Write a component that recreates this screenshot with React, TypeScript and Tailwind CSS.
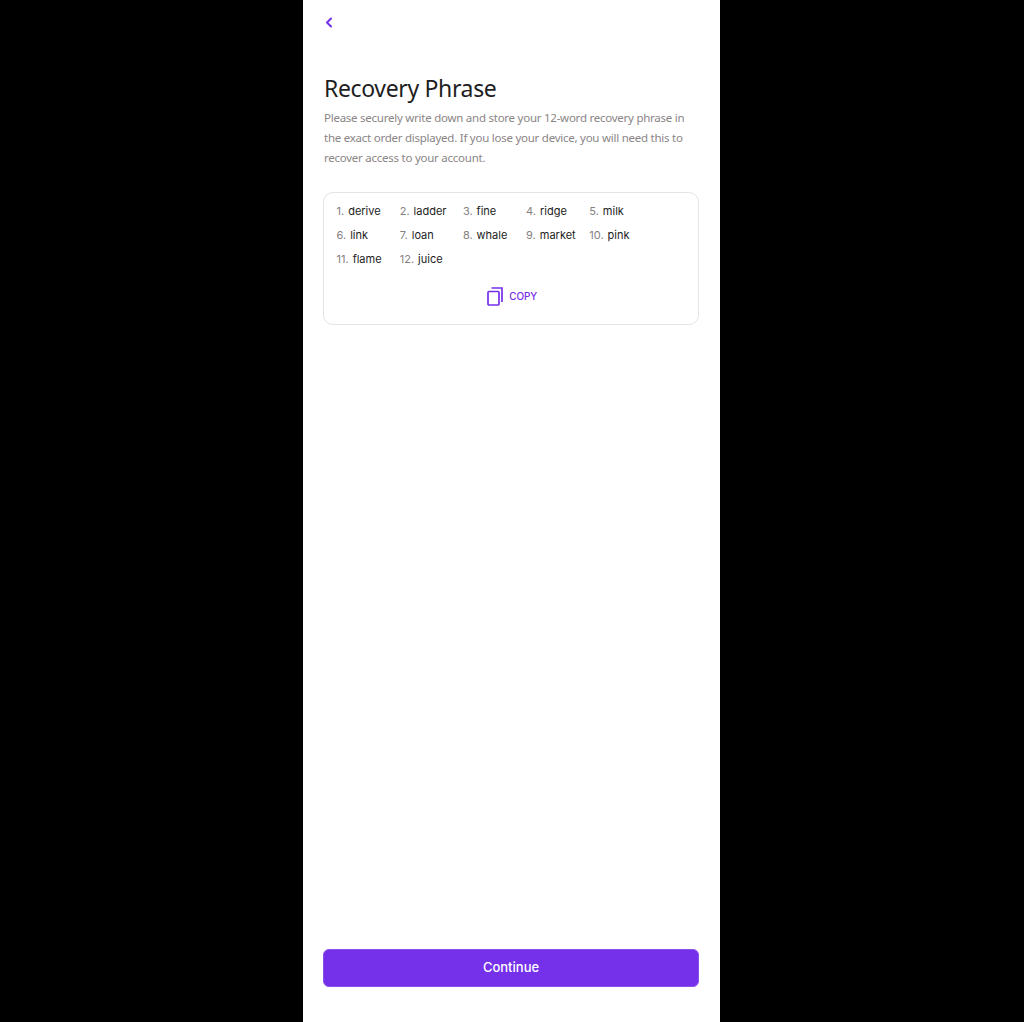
import { ChevronLeft } from "lucide-react";

const words = ["derive", "ladder", "fine", "ridge", "milk", "link", "loan", "whale", "market", "pink", "flame", "juice"];

export default function App() {
  return (
    <div className="flex h-[1022px] justify-center bg-black">
      <div className="ml-[-1px] flex h-full w-[417px] flex-col bg-white pb-[35px] pl-[20px] pr-[21px] pt-[12px]">
        <button className="flex h-[20px] w-[14px] items-center text-[#7530ea]">
          <ChevronLeft size={21} strokeWidth={3} className="ml-[-2px]" />
        </button>

        <h1 className="mt-[39px] pl-[1px] font-['Noto_Sans'] text-[23px] leading-[34px] tracking-[-0.35px] text-[#1e1e1e]">Recovery Phrase</h1>
        <p className="mt-[3px] pl-[1px] font-['Noto_Sans'] text-[11.5px] leading-[20px] tracking-[-0.25px] text-[#8a8586]">
          Please securely write down and store your 12-word recovery phrase in the exact order displayed. If you lose your device, you will need this to recover access to your account.
        </p>

        <div className="mt-[24px] rounded-[10px] border border-[#e4e4e4] pb-[18px] pl-[12.5px] pr-[12px] pt-[6px]">
          <div className="grid grid-cols-[63.2px_63.2px_63.2px_63.2px_1fr] font-['Inter'] text-[11px] leading-[24px]">
            {words.map((word, i) => (
              <div key={word} className="flex gap-[4px] whitespace-nowrap">
                <span className="text-[#85807f]">{i + 1}.</span>
                <span className="text-[#1c1c1c]">{word}</span>
              </div>
            ))}
          </div>
          <button className="mx-auto mt-[16px] flex translate-x-[1px] items-center justify-center gap-[6px] font-['Inter'] text-[10px] font-medium tracking-[-0.1px] text-[#7530ea]">
            <svg width="16" height="19" viewBox="0 0 16 19" fill="none" stroke="currentColor" strokeWidth="1.7">
              <rect x="1" y="4.5" width="11" height="13.5" rx="1" />
              <path d="M4.5 1H15v14" />
            </svg>
            COPY
          </button>
        </div>

        <button className="mt-auto h-[38px] w-full rounded-[6px] border border-[#8a50ec] bg-[#7530ea] font-['Inter'] text-[13px] font-medium text-white">
          Continue
        </button>
      </div>
    </div>
  );
}
